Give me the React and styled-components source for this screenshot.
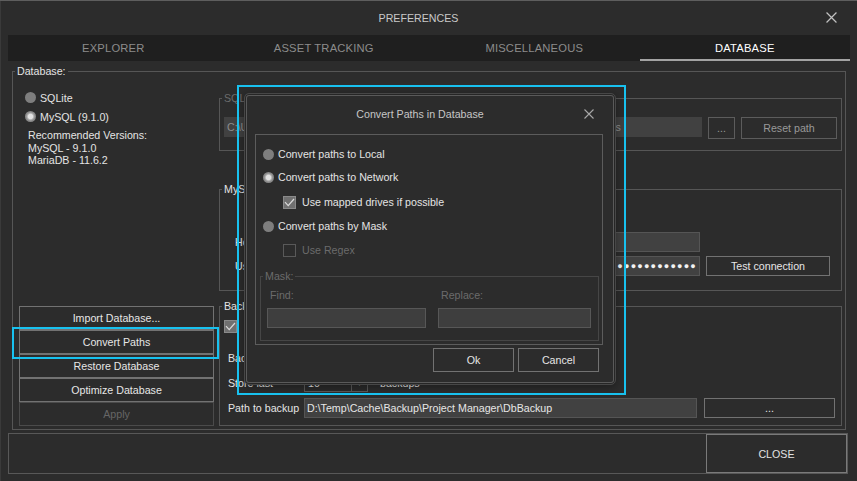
import React from 'react';
import styled, { createGlobalStyle } from 'styled-components';

const GlobalStyle = createGlobalStyle`
  html, body {
    margin: 0;
    padding: 0;
    background: #2c2c2c;
  }
  body {
    font-family: "Liberation Sans", Arial, sans-serif;
    font-size: 10.67px;
    color: #e4e4e4;
  }
  * { box-sizing: border-box; }
`;

const Window = styled.div`
  position: relative;
  width: 857px;
  height: 481px;
  background: #2c2c2c;
  box-shadow: inset 0 1px 0 #5e5e5e, inset 1px 0 0 #3a3a3a;
  overflow: hidden;
`;

const TitleBar = styled.div`
  height: 35px;
  display: grid;
  grid-template-columns: 1fr auto 1fr;
  align-items: center;
  padding-right: 20px;
  color: #c9c9c9;
`;

const CloseIcon = styled.svg`
  justify-self: end;
  display: block;
`;

const TabBar = styled.div`
  margin-left: 8px;
  width: 842px;
  height: 26px;
  background: #1f1f1f;
  display: grid;
  grid-template-columns: repeat(4, 1fr);
`;

const Tab = styled.div`
  display: flex;
  align-items: center;
  justify-content: center;
  font-size: 11.2px;
  letter-spacing: 0.2px;
  color: ${p => (p.$active ? '#ffffff' : '#8c8c8c')};
  box-shadow: ${p => (p.$active ? 'inset 0 -2px 0 #a3a3a3' : 'none')};
`;

const Group = styled.fieldset`
  margin: ${p => p.$margin || '0'};
  padding: 0;
  min-width: 0;
  border: 1px solid ${p => p.$border || '#565656'};
  height: ${p => (p.$height ? `${p.$height}px` : 'auto')};
`;

const Legend = styled.legend`
  margin-left: 2px;
  padding: 0 2px;
  line-height: 14px;
  color: ${p => (p.$dim ? '#6b6b6b' : '#e4e4e4')};
`;

const DbGrid = styled.div`
  display: grid;
  grid-template-columns: 195px minmax(0, 1fr);
  column-gap: 5px;
  padding: 0 3px 3px 6px;
`;

const LeftColumn = styled.div`
  display: flex;
  flex-direction: column;
  padding-top: 10px;
`;

const RightColumn = styled.div`
  display: flex;
  flex-direction: column;
  padding-top: 13px;
  min-width: 0;
`;

const RadioRow = styled.div`
  height: ${p => p.$h || 19}px;
  margin-top: ${p => p.$mt || 0}px;
  display: flex;
  align-items: center;
  gap: 4px;
  padding-left: ${p => p.$indent ?? 6}px;
  white-space: nowrap;
`;

const Radio = styled.span`
  width: 11px;
  height: 11px;
  border-radius: 50%;
  flex: none;
  background: ${p =>
    p.$checked
      ? 'radial-gradient(circle, #e2e2e2 0 2.2px, #a9a9a9 3.4px, #878787 4.6px)'
      : '#7e7e7e'};
`;

const CheckRow = styled.div`
  height: 20px;
  margin-top: ${p => p.$mt || 0}px;
  display: flex;
  align-items: center;
  gap: ${p => p.$gap ?? 6}px;
  padding-left: ${p => p.$indent ?? 0}px;
  color: ${p => (p.$dim ? '#6b6b6b' : '#e4e4e4')};
  white-space: nowrap;
`;

const CheckBox = styled.span`
  width: 13px;
  height: 13px;
  flex: none;
  display: flex;
  align-items: center;
  justify-content: center;
  border: 1px solid ${p => (p.$checked ? '#8a8a8a' : '#595959')};
  background: ${p => (p.$checked ? '#707070' : 'transparent')};
`;

const Versions = styled.div`
  margin-top: 3px;
  padding-left: 9px;
  line-height: 12.5px;
`;

const ButtonStack = styled.div`
  margin-top: auto;
  display: flex;
  flex-direction: column;
`;

const Button = styled.div`
  height: ${p => p.$h || 24}px;
  width: ${p => (p.$w ? `${p.$w}px` : 'auto')};
  flex: none;
  display: flex;
  align-items: center;
  justify-content: center;
  border: 1px solid ${p => (p.$dim ? '#4b4b4b' : p.$soft ? '#5c5c5c' : '#727272')};
  color: ${p => (p.$dim ? '#666666' : p.$soft ? '#999999' : '#e6e6e6')};
  background: #2c2c2c;
  white-space: nowrap;
`;

const PathRow = styled.div`
  display: flex;
  align-items: flex-start;
  padding: 12px 4px 11px 4px;
  gap: 6px;
`;

const TextBox = styled.div`
  height: ${p => p.$h || 20}px;
  flex: ${p => (p.$w ? 'none' : '1')};
  width: ${p => (p.$w ? `${p.$w}px` : 'auto')};
  min-width: 0;
  display: flex;
  align-items: center;
  justify-content: ${p => (p.$end ? 'flex-end' : 'flex-start')};
  padding: 0 2px;
  overflow: hidden;
  white-space: nowrap;
  background: #414141;
  border: 1px solid ${p => p.$border || '#555555'};
  color: ${p => (p.$dim ? '#8d8d8d' : '#e6e6e6')};
`;

const Dots = styled.span`
  font-size: 9px;
  letter-spacing: 1.2px;
  color: #f2f2f2;
`;

const MySqlBody = styled.div`
  display: grid;
  grid-template-columns: 59px minmax(0, 1fr) 124px;
  column-gap: 6px;
  row-gap: 4px;
  padding: 36px 11px 14px 15px;
`;

const FieldLabel = styled.div`
  height: 20px;
  display: flex;
  align-items: center;
  padding-left: ${p => p.$indent || 0}px;
  color: ${p => (p.$dim ? '#6b6b6b' : '#e4e4e4')};
  white-space: nowrap;
`;

const Inline = styled.div`
  display: flex;
  align-items: center;
  gap: ${p => p.$gap || 8}px;
  min-width: 0;
`;

const BackupBody = styled.div`
  display: flex;
  flex-direction: column;
  padding: 3px 6px 7px 4px;
`;

const BackupRow = styled.div`
  display: grid;
  grid-template-columns: 73px minmax(0, 1fr) 131px;
  column-gap: 7px;
  margin-top: ${p => p.$mt || 0}px;
  height: 20px;
  align-items: center;
`;

const Spinner = styled.div`
  width: 64px;
  height: 17px;
  flex: none;
  display: grid;
  grid-template-columns: 1fr 16px;
  border: 1px solid #595959;
  background: #2a2a2a;
  color: #e4e4e4;
  & > span {
    display: flex;
    align-items: center;
    padding-left: 3px;
  }
  & > span:last-child {
    justify-content: center;
    padding: 0;
    border-left: 1px solid #595959;
    font-size: 7px;
    color: #9a9a9a;
  }
`;

const BottomPanel = styled.div`
  margin: 3px 9px 0 8px;
  height: 41px;
  display: flex;
  justify-content: flex-end;
  border: 1px solid #585858;
`;

const CloseButton = styled.div`
  width: 141px;
  display: flex;
  align-items: center;
  justify-content: center;
  border: 1px solid #7a7a7a;
  color: #e2e2e2;
`;

const Dialog = styled.div`
  position: absolute;
  left: 244px;
  top: 93px;
  width: 372px;
  height: 292px;
  padding: 1px;
  display: flex;
  flex-direction: column;
  background: #2c2c2c;
  border: 1px solid #474747;
  border-radius: 5px;
  box-shadow: inset 0 0 0 1px #262626, inset 0 0 0 2px #5a5a5a, 0 2px 10px rgba(0, 0, 0, 0.35);
`;

const DialogTitle = styled.div`
  height: 37px;
  display: grid;
  grid-template-columns: 1fr auto 1fr;
  align-items: center;
  padding-right: 20px;
  color: #c6c6c6;
`;

const OptionsBox = styled.div`
  margin: 2px 11px 0 9px;
  border: 1px solid #5c5c5c;
  display: flex;
  flex-direction: column;
`;

const MaskGrid = styled.div`
  display: grid;
  grid-template-columns: 159px 153px;
  column-gap: 12px;
  padding: 0 6px 12px 6px;
`;

const MaskLabel = styled.div`
  margin-top: 5px;
  height: 14px;
  display: flex;
  align-items: center;
  padding-left: 3px;
  color: #6b6b6b;
`;

const MaskInput = styled.div`
  margin-top: 6px;
  height: 20px;
  background: #3e3e3e;
  border: 1px solid #575757;
`;

const DialogButtons = styled.div`
  margin: 3px 15px 0 0;
  display: flex;
  justify-content: flex-end;
  gap: 4px;
`;

const Highlight = styled.div`
  position: absolute;
  left: ${p => p.$x}px;
  top: ${p => p.$y}px;
  width: ${p => p.$w}px;
  height: ${p => p.$h}px;
  border: 2px solid #18c1ef;
  pointer-events: none;
`;

const XIcon = ({ size, color }) => (
  <CloseIcon width={size} height={size} viewBox="0 0 10 10">
    <path d="M0.5 0.5 L9.5 9.5 M9.5 0.5 L0.5 9.5" stroke={color} strokeWidth="1.1" fill="none" />
  </CloseIcon>
);

const Tick = () => (
  <svg width="11" height="9" viewBox="0 0 11 9">
    <path d="M1 4.2 L4.2 7.6 L10 1" stroke="#dadada" strokeWidth="1.2" fill="none" />
  </svg>
);

const tabs = ['EXPLORER', 'ASSET TRACKING', 'MISCELLANEOUS', 'DATABASE'];
const dbButtons = ['Import Database...', 'Convert Paths', 'Restore Database', 'Optimize Database'];

export default function App() {
  return (
    <>
      <GlobalStyle />
      <Window>
        <TitleBar>
          <span />
          <span>PREFERENCES</span>
          <XIcon size={11} color="#c2c2c2" />
        </TitleBar>

        <TabBar>
          {tabs.map(t => (
            <Tab key={t} $active={t === 'DATABASE'}>{t}</Tab>
          ))}
        </TabBar>

        <Group $margin="3px 11px 0 12px">
          <Legend>Database:</Legend>
          <DbGrid>
            <LeftColumn>
              <RadioRow><Radio />SQLite</RadioRow>
              <RadioRow><Radio $checked />MySQL (9.1.0)</RadioRow>
              <Versions>
                Recommended Versions:<br />
                MySQL - 9.1.0<br />
                MariaDB - 11.6.2
              </Versions>
              <ButtonStack>
                {dbButtons.map(b => (
                  <Button key={b}>{b}</Button>
                ))}
                <Button $dim>Apply</Button>
              </ButtonStack>
            </LeftColumn>

            <RightColumn>
              <Group $height={60}>
                <Legend $dim>SQLite</Legend>
                <PathRow>
                  <TextBox $dim $border="#414141">
                    C:\Users\Administrator\AppData\Roaming\Project Manager\Database\User Settings
                  </TextBox>
                  <Button $h={22} $w={27} $soft>...</Button>
                  <Button $h={22} $w={96} $soft>Reset path</Button>
                </PathRow>
              </Group>

              <Group $margin="31px 0 0 0" $height={109}>
                <Legend>MySQL</Legend>
                <MySqlBody>
                  <FieldLabel>Host:</FieldLabel>
                  <TextBox />
                  <span />
                  <FieldLabel>User:</FieldLabel>
                  <Inline $gap={6}>
                    <TextBox $w={120} />
                    <TextBox $end>
                      <Dots>{'●'.repeat(38)}</Dots>
                    </TextBox>
                  </Inline>
                  <Button $h={20}>Test connection</Button>
                </MySqlBody>
              </Group>

              <Group $margin="8px 0 0 0" $height={127}>
                <Legend>Backup</Legend>
                <BackupBody>
                  <CheckRow $gap={8}>
                    <CheckBox $checked><Tick /></CheckBox>
                    Enable automatic backups
                  </CheckRow>
                  <BackupRow $mt={12}>
                    <FieldLabel $indent={4}>Backup every</FieldLabel>
                    <Inline $gap={12}>
                      <Spinner><span>24</span><span>▼</span></Spinner>
                      hours
                    </Inline>
                  </BackupRow>
                  <BackupRow $mt={5}>
                    <FieldLabel $indent={4}>Store last</FieldLabel>
                    <Inline $gap={12}>
                      <Spinner><span>10</span><span>▼</span></Spinner>
                      backups
                    </Inline>
                  </BackupRow>
                  <BackupRow $mt={5}>
                    <FieldLabel $indent={4}>Path to backup</FieldLabel>
                    <TextBox>D:\Temp\Cache\Backup\Project Manager\DbBackup</TextBox>
                    <Button $h={20}>...</Button>
                  </BackupRow>
                </BackupBody>
              </Group>
            </RightColumn>
          </DbGrid>
        </Group>

        <BottomPanel>
          <CloseButton>CLOSE</CloseButton>
        </BottomPanel>

        <Dialog>
          <DialogTitle>
            <span />
            <span>Convert Paths in Database</span>
            <XIcon size={10} color="#a8a8a8" />
          </DialogTitle>
          <OptionsBox>
            <RadioRow $h={20} $mt={9} $indent={7}><Radio />Convert paths to Local</RadioRow>
            <RadioRow $h={20} $mt={3} $indent={7}><Radio $checked />Convert paths to Network</RadioRow>
            <CheckRow $mt={5} $indent={27}>
              <CheckBox $checked><Tick /></CheckBox>
              Use mapped drives if possible
            </CheckRow>
            <RadioRow $h={20} $mt={4} $indent={7}><Radio />Convert paths by Mask</RadioRow>
            <CheckRow $mt={4} $indent={27} $dim>
              <CheckBox />
              Use Regex
            </CheckRow>
            <Group $margin="9px 3px 3px 4px" $border="#464646">
              <Legend $dim>Mask:</Legend>
              <MaskGrid>
                <MaskLabel>Find:</MaskLabel>
                <MaskLabel>Replace:</MaskLabel>
                <MaskInput />
                <MaskInput />
              </MaskGrid>
            </Group>
          </OptionsBox>
          <DialogButtons>
            <Button $w={81}>Ok</Button>
            <Button $w={81}>Cancel</Button>
          </DialogButtons>
        </Dialog>

        <Highlight $x={237} $y={85} $w={389} $h={310} />
        <Highlight $x={12} $y={327} $w={207} $h={32} />
      </Window>
    </>
  );
}
